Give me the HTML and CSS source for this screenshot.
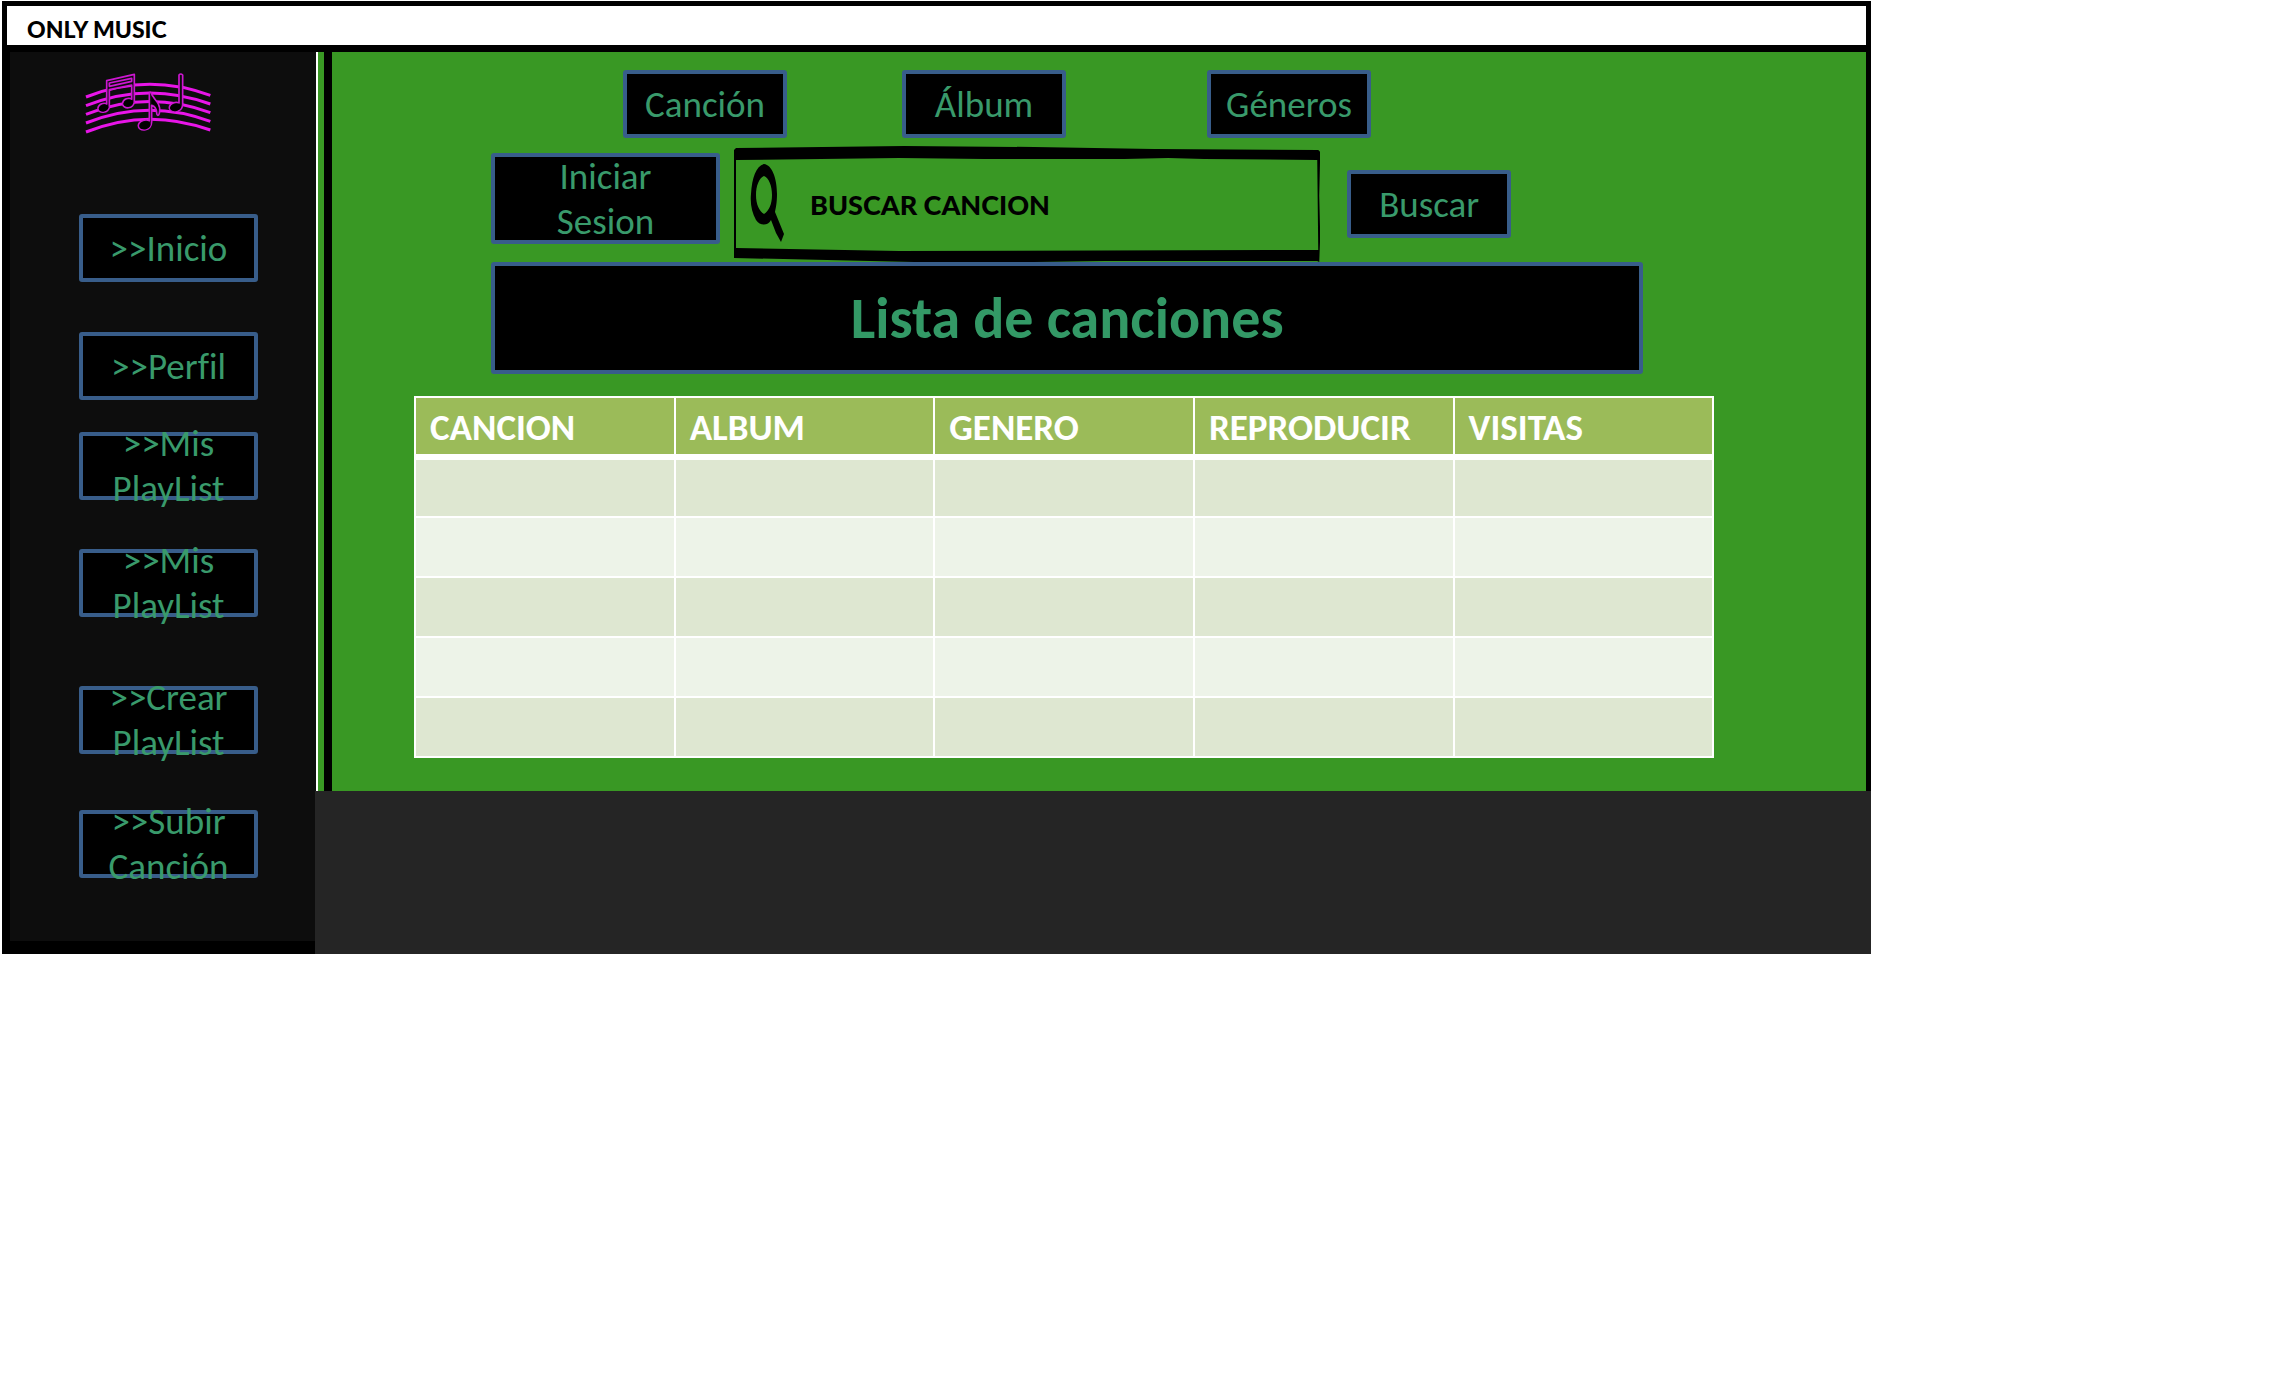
FILE: index.html
```html
<!DOCTYPE html>
<html lang="es">
<head>
<meta charset="utf-8">
<title>Only Music</title>
<link rel="stylesheet" href="styles.css">
</head>
<body>
<div class="window">
  <header class="titlebar">
    <h1 class="brand">ONLY MUSIC</h1>
  </header>
  <div class="layout">
    <aside class="sidebar">
      <svg class="logo" viewBox="0 0 420 225" role="img" aria-label="Only Music">
        <g fill="none" stroke="#e815e8" stroke-width="9">
          <path d="M21 96Q205 22 394 91"/>
          <path d="M21 122Q205 48 394 117"/>
          <path d="M21 148Q205 74 394 143"/>
          <path d="M21 174Q205 100 394 169"/>
          <path d="M21 201Q205 127 394 195"/>
        </g>
        <g fill="#0d0d0d" stroke="#cc16d0" stroke-width="5" stroke-linejoin="round">
          <path fill-rule="evenodd" d="M83 47L166 28V108C166 135 130 133 131 115C132 101 150 97 158 103V60L91 74V122C90 148 55 146 57 129C59 116 76 112 83 117ZM91 54V64L158 49V40Z"/>
          <path d="M211 84Q213 80 217 84C220 103 245 109 242 137C241 156 233 153 233 143C232 130 225 123 218 121V171C217 200 177 201 178 182C179 168 199 162 211 167Z"/>
          <path d="M300 30Q305 24 311 30V120C308 147 268 143 271 127C273 113 291 110 300 114Z"/>
        </g>
        <g fill="#000">
          <ellipse cx="74" cy="129" rx="15" ry="10" transform="rotate(-15 74 129)"/>
          <ellipse cx="148" cy="114" rx="15" ry="10" transform="rotate(-15 148 114)"/>
          <ellipse cx="198" cy="181" rx="17" ry="12" transform="rotate(-15 198 181)"/>
          <ellipse cx="290" cy="127" rx="17" ry="11" transform="rotate(-15 290 127)"/>
          <path d="M218 92C222 108 242 115 238 138C232 123 227 118 218 116Z"/>
        </g>
      </svg>
      <nav class="menu">
        <button class="btn" type="button">&gt;&gt;Inicio</button>
        <button class="btn" type="button">&gt;&gt;Perfil</button>
        <button class="btn" type="button">&gt;&gt;Mis PlayList</button>
        <button class="btn" type="button">&gt;&gt;Mis PlayList</button>
        <button class="btn" type="button">&gt;&gt;Crear PlayList</button>
        <button class="btn" type="button">&gt;&gt;Subir Canción</button>
      </nav>
    </aside>
    <div class="content">
      <main class="panel">
        <div class="tools">
          <nav class="tabs">
            <button class="btn" type="button">Canción</button>
            <button class="btn" type="button">Álbum</button>
            <button class="btn" type="button">Géneros</button>
          </nav>
          <form class="search-row">
            <button class="btn btn-login" type="button">Iniciar Sesion</button>
            <div class="search">
              <svg class="search-frame" viewBox="0 0 586 116" preserveAspectRatio="none" aria-hidden="true">
                <path fill-rule="evenodd" d="M0 4L2 2L170 0L300 1L420 3L584 4L586 6L585 50L586 90L585 116L583 115L370 115L300 116H180L0 112ZM2 14L165 12L250 13H390L434 12L470 13L583 14L584 104L165 105L2 102Z"/>
              </svg>
              <svg class="search-icon" viewBox="0 0 36 80" aria-hidden="true">
                <path fill-rule="evenodd" d="M14 0C22 1 27 14 27 30C27 38 26 43 25 48L34 70L31 78L26 69L21 56C18 62 10 62 6 56C2 49 0 40 1 30C2 14 6 2 14 0ZM14 12C9 14 6 22 6 31C6 40 9 47 14 50C19 47 22 40 22 31C22 22 19 14 14 12Z"/>
              </svg>
              <input class="search-input" type="text" placeholder="BUSCAR CANCION" aria-label="Buscar cancion">
            </div>
            <button class="btn btn-search" type="submit">Buscar</button>
          </form>
          <h2 class="heading">Lista de canciones</h2>
        </div>
        <table class="songs">
          <thead>
            <tr><th scope="col">CANCION</th><th scope="col">ALBUM</th><th scope="col">GENERO</th><th scope="col">REPRODUCIR</th><th scope="col">VISITAS</th></tr>
          </thead>
          <tbody>
            <tr><td></td><td></td><td></td><td></td><td></td></tr>
            <tr><td></td><td></td><td></td><td></td><td></td></tr>
            <tr><td></td><td></td><td></td><td></td><td></td></tr>
            <tr><td></td><td></td><td></td><td></td><td></td></tr>
            <tr><td></td><td></td><td></td><td></td><td></td></tr>
          </tbody>
        </table>
      </main>
      <footer class="footer"></footer>
    </div>
  </div>
</div>
</body>
</html>
```
FILE: styles.css
```css
* {
  box-sizing: border-box;
}

body {
  margin: 0;
  background: #fff;
  font-family: Carlito, Calibri, Lato, sans-serif;
  font-variant-ligatures: none;
}

.window {
  width: calc(82% - 2px);
  margin: 1px 0 0 2px;
}

.titlebar {
  display: flex;
  align-items: center;
  height: 51px;
  padding: 6px 20px 0;
  border: 5px solid #000;
  border-bottom-width: 7px;
}

.brand {
  margin: 0;
  font-family: Lato, sans-serif;
  font-size: 23px;
  font-weight: 900;
  line-height: 30px;
}

.layout {
  display: flex;
}

.sidebar {
  flex: none;
  width: 313px;
  padding: 13px 0 0 69px;
  border-left: 8px solid #000;
  border-bottom: 13px solid #000;
  background: #0d0d0d;
}

.logo {
  display: block;
  width: 140px;
  height: 75px;
}

.menu {
  display: grid;
  grid-template-rows: 118px 100px 117px 137px 124px 68px;
  align-items: start;
  padding-top: 74px;
}

.btn {
  display: flex;
  align-items: center;
  justify-content: center;
  width: 164px;
  height: 68px;
  padding: 0;
  border: 4px solid #385d8a;
  border-radius: 3px;
  background: #000;
  color: #399a6b;
  font-family: inherit;
  font-size: 37px;
  font-variant-ligatures: none;
  line-height: 45px;
  text-align: center;
}

.menu .btn {
  width: 179px;
  padding: 0 16px;
}

.content {
  display: flex;
  flex: 1;
  flex-direction: column;
  background: linear-gradient(90deg, #0d0d0d 1px, #fff 1px, #fff 3px, #399824 3px);
}

.panel {
  flex: none;
  margin-left: 9px;
  padding: 18px 152px 33px 82px;
  border-right: 5px solid #000;
  border-left: 8px solid #000;
  background: #399824;
}

.tools {
  margin: 0 71px 22px 77px;
}

.tabs {
  display: grid;
  grid-template-columns: 279px 305px 164px;
  padding-left: 132px;
}

.search-row {
  display: flex;
  align-items: center;
  height: 116px;
  margin-top: 8px;
  padding-right: 132px;
}

.btn-login {
  flex: none;
  align-self: flex-start;
  width: 229px;
  height: 91px;
  margin: 7px 14px 0 0;
  padding: 0 50px;
}

.search {
  position: relative;
  display: flex;
  flex: 1;
  align-items: center;
  align-self: stretch;
  gap: 24px;
  margin-right: 27px;
  padding: 0 24px 0 16px;
}

.search-frame {
  position: absolute;
  inset: 0;
  width: 100%;
  height: 100%;
}

.search-icon {
  flex: none;
  width: 36px;
  height: 80px;
}

.search-input {
  position: relative;
  flex: 1;
  min-width: 0;
  height: 60px;
  padding: 0;
  border: 0;
  background: transparent;
  color: #000;
  font-family: Lato, sans-serif;
  font-size: 27px;
  font-weight: 900;
}

.search-input::placeholder {
  color: #000;
  opacity: 1;
}

.heading {
  display: flex;
  align-items: center;
  justify-content: center;
  height: 112px;
  margin: 0;
  border: 4px solid #385d8a;
  border-radius: 3px;
  background: #000;
  color: #339966;
  font-size: 58px;
  font-weight: 700;
}

.songs {
  width: 100%;
  border-collapse: collapse;
  table-layout: fixed;
}

.songs th,
.songs td {
  height: 60px;
  padding: 0 14px;
  border: 2px solid #fff;
}

.songs th {
  padding-top: 3px;
  border-bottom-width: 6px;
  background: #9bbb59;
  color: #fff;
  font-size: 37px;
  font-weight: 700;
  line-height: 40px;
  text-align: left;
}

.songs tbody tr:nth-child(odd) {
  background: #dee7d1;
}

.songs tbody tr:nth-child(even) {
  background: #edf3e8;
}

.footer {
  flex: 1;
  min-height: 163px;
  background: #252525;
}
```
